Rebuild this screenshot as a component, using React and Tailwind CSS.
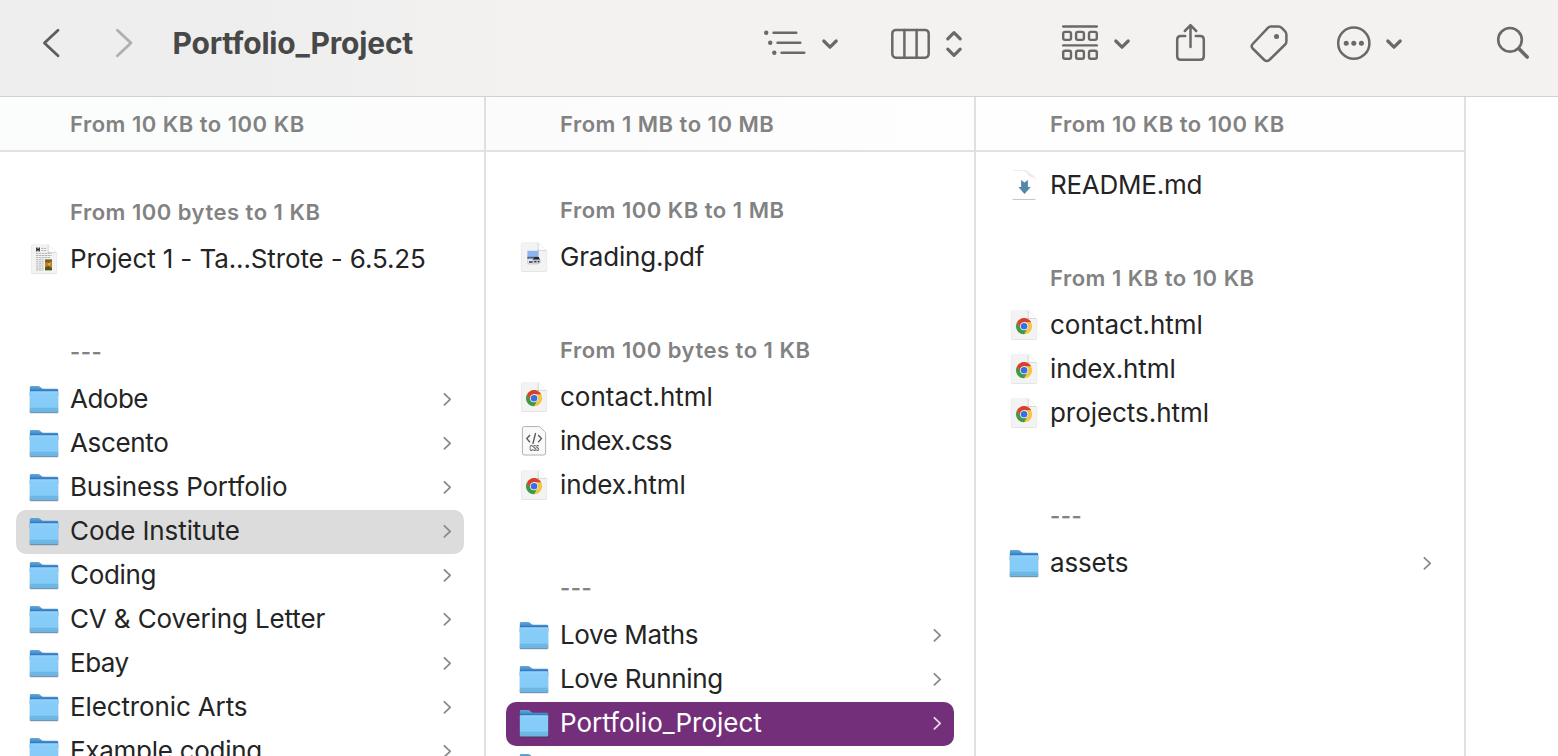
const INK = '#6a6967';

function Glyph({ x, width, className, color = INK, stroke = 2.6, children }) {
  return (
    <svg
      className={`h-12 shrink-0 ${className || ''}`}
      width={width}
      height="48"
      viewBox={`${x} 20 ${width} 48`}
      fill="none"
      stroke={color}
      strokeWidth={stroke}
      strokeLinecap="round"
      strokeLinejoin="round"
    >
      {children}
    </svg>
  );
}

function MenuChevron({ className }) {
  return (
    <Glyph x={0} width={18} stroke={3.2} className={className}>
      <path d="M2.8 41l6.2 6.2L15.2 41" />
    </Glyph>
  );
}

function Toolbar() {
  return (
    <header className="flex h-24 shrink-0 items-start bg-linear-to-r from-[#eeeeee] from-15% to-[#f4f2f1] to-35% pt-5 pl-[42px]">
      <Glyph x={42} width={18} stroke={2.8} color="#5e5e5e">
        <path d="M58 30.2L44.4 43L58 55.8" />
      </Glyph>
      <Glyph x={115} width={18} stroke={2.8} color="#b0b0b0" className="ml-[55px]">
        <path d="M117.4 30.2L131 43L117.4 55.8" />
      </Glyph>
      <h1 className="ml-[39.5px] h-12 w-[591.5px] text-[30px] leading-[47px] font-bold tracking-[-0.2px] whitespace-nowrap text-[#484848]">
        Portfolio_Project
      </h1>
      <Glyph x={764} width={42} stroke={2.6}>
        <path d="M773.6 32.8H796.2M777.6 42.8H800.2M781.6 52.8H804.2" />
        <g fill={INK} stroke="none">
          <circle cx="766.2" cy="32.8" r="2.2" />
          <circle cx="770.2" cy="42.8" r="2.2" />
          <circle cx="774.3" cy="52.8" r="2.2" />
        </g>
      </Glyph>
      <MenuChevron className="ml-[15px]" />
      <Glyph x={890} width={41} stroke={2.5} className="ml-[51px]">
        <rect x="892.3" y="29.9" width="36.4" height="27.8" rx="3.6" />
        <path d="M904.4 30V57.6M916.6 30V57.6" />
      </Glyph>
      <Glyph x={945} width={18} stroke={3.2} className="ml-[14px]">
        <path d="M947.8 38.8L954 32.6L960.2 38.8M947.8 49.2L954 55.4L960.2 49.2" />
      </Glyph>
      <Glyph x={1061} width={38} stroke={2.4} className="ml-[98px]">
        <path d="M1063.2 26.5H1096.8M1063.2 45.4H1096.8" />
        <rect x="1063.2" y="31.9" width="7.8" height="8" rx="1.8" />
        <rect x="1076.1" y="31.9" width="7.8" height="8" rx="1.8" />
        <rect x="1089" y="31.9" width="7.8" height="8" rx="1.8" />
        <rect x="1063.2" y="50.8" width="7.8" height="8" rx="1.8" />
        <rect x="1076.1" y="50.8" width="7.8" height="8" rx="1.8" />
        <rect x="1089" y="50.8" width="7.8" height="8" rx="1.8" />
      </Glyph>
      <MenuChevron className="ml-[14px]" />
      <Glyph x={1175} width={31} stroke={2.5} className="ml-[44px]">
        <path d="M1185.2 36H1180.8C1178.4 36 1177.2 37.2 1177.2 39.6V56.2C1177.2 58.6 1178.4 59.8 1180.8 59.8H1200.2C1202.6 59.8 1203.8 58.6 1203.8 56.2V39.6C1203.8 37.2 1202.6 36 1200.2 36H1195.8" />
        <path d="M1190.5 47V25.6M1184.8 31L1190.5 25.2L1196.2 31" />
      </Glyph>
      <Glyph x={1249} width={40} stroke={2.5} className="ml-[43px]">
        <path d="M1270.9 26.6H1278.6Q1280.4 26.6 1281.7 27.9L1284.9 31.1Q1286.4 32.6 1286.4 34.6V41.4Q1286.4 43.2 1285.1 44.5L1269.3 60Q1266.7 62 1264.3 60L1252.7 48.5Q1250.6 46.2 1252.7 44L1267.9 27.9Q1269.1 26.6 1270.9 26.6Z" />
        <circle cx="1276.5" cy="36.5" r="2.5" fill={INK} stroke="none" />
      </Glyph>
      <Glyph x={1336} width={36} stroke={2.5} className="ml-[47px]">
        <circle cx="1353.8" cy="43.2" r="15.6" />
        <g fill={INK} stroke="none">
          <circle cx="1346.2" cy="43.2" r="2.5" />
          <circle cx="1353.8" cy="43.2" r="2.5" />
          <circle cx="1361.4" cy="43.2" r="2.5" />
        </g>
      </Glyph>
      <MenuChevron className="ml-[13px]" />
      <Glyph x={1496} width={34} stroke={2.6} className="ml-[93px]">
        <circle cx="1510" cy="39.8" r="11.8" />
        <path d="M1519 48.8L1527.2 57" strokeWidth="3.6" />
      </Glyph>
    </header>
  );
}

function FolderIcon() {
  return (
    <svg width="32" height="32" viewBox="0 0 32 32">
      <defs>
        <linearGradient id="folderBack" x1="0" y1="2" x2="0" y2="12" gradientUnits="userSpaceOnUse">
          <stop offset="0" stopColor="#62a9d8" />
          <stop offset="0.3" stopColor="#4a92cf" />
          <stop offset="0.5" stopColor="#2f74bf" />
          <stop offset="1" stopColor="#2f74bf" />
        </linearGradient>
        <linearGradient id="folderFront" x1="0" y1="0" x2="0" y2="1">
          <stop offset="0" stopColor="#9ad6fb" />
          <stop offset="0.12" stopColor="#88cdf9" />
          <stop offset="0.74" stopColor="#85cbf8" />
          <stop offset="0.84" stopColor="#79c0ee" />
          <stop offset="1" stopColor="#6cb4e3" />
        </linearGradient>
      </defs>
      <path d="M1.4 8H30.6V28.4Q30.6 29.8 29.2 29.8H2.8Q1.4 29.8 1.4 28.4Z" fill="#000" opacity="0.12" />
      <path d="M1.8 26H30.2V27.8Q30.2 29 29 29H3Q1.8 29 1.8 27.8Z" fill="#4f7896" opacity="0.8" />
      <path d="M1.8 3.4Q1.8 2 3.2 2H10.2Q11.2 2 12 2.7L13.4 4Q14.2 4.7 15.2 4.7H28.8Q30.2 4.7 30.2 6V12H1.8Z" fill="url(#folderBack)" />
      <path d="M1.8 8.4Q1.8 7.2 3 7.2H29Q30.2 7.2 30.2 8.4V27Q30.2 28.2 29 28.2H3Q1.8 28.2 1.8 27Z" fill="url(#folderFront)" />
      <path d="M2 24.4H30M2 26.2H30" stroke="#5fa9d8" strokeWidth="0.6" />
    </svg>
  );
}

function Sheet({ children }) {
  return (
    <svg width="32" height="32" viewBox="0 1 32 32">
      <path d="M2.9 3.4Q2.9 1.4 4.9 1.4H20.4L29.1 10.2V29Q29.1 31 27.1 31H4.9Q2.9 31 2.9 29Z" fill="#000" opacity="0.12" />
      <path d="M3.4 3Q3.4 1.6 4.8 1.6H20.2L28.6 10V28.8Q28.6 30.2 27.2 30.2H4.8Q3.4 30.2 3.4 28.8Z" fill="#f3f3f3" />
      <path d="M19.8 1.6V10H28.6Z" fill="#b8b8b8" />
      <path d="M20.4 1.8L28.4 9.6H21.6Q20.4 9.6 20.4 8.4Z" fill="#fcfcfc" />
      {children}
    </svg>
  );
}

function ChromeIcon() {
  return (
    <Sheet>
      <g transform="translate(16.1 17.2)">
        <circle r="8.1" fill="#f6c445" />
        <path d="M-7.01 -4.05A8.1 8.1 0 0 0 0 8.1L3.4 2L-3.4 2Z" fill="#3c9a4d" />
        <path d="M-7.01 -4.05A8.1 8.1 0 0 1 7.01 -4.05H0L-3.6 2Z" fill="#d6412f" />
        <circle r="4" fill="#fff" />
        <circle r="3.3" fill="#3570e0" />
      </g>
    </Sheet>
  );
}

function PdfIcon() {
  return (
    <Sheet>
      <rect x="9.4" y="9.8" width="11.2" height="8" fill="#8db4ef" />
      <rect x="9.4" y="15.8" width="11.2" height="2" fill="#47618c" />
      <rect x="9.6" y="17.8" width="11.4" height="5.2" rx="1.6" fill="#e7ebf2" stroke="#a5abb8" strokeWidth="0.5" />
      <path d="M14.4 19.2L16.4 16H20.6L22.4 19.2Z" fill="#23262d" />
      <rect x="14.6" y="18.6" width="7.8" height="3.8" rx="1" fill="#c3c7ce" />
      <path d="M11 21H14.6M16.2 20.6H18.4M19.8 20.6H21.4" stroke="#2f333b" strokeWidth="1.3" />
    </Sheet>
  );
}

function DocumentIcon() {
  return (
    <Sheet>
      <path d="M8.8 4.6V8.4M11.2 4.6V8.4M8.8 6.5H11.2" stroke="#222" strokeWidth="1.3" />
      <path
        d="M13 5.4H18.6M13 7.6H18.6M8 10.4H23.6M8 12.5H23.6M8 14.6H22.6M8 16.7H15.6M8 18.8H15.6M8 20.9H15.6M8 23H15.6M8 25.1H15.6M8 27H15.6"
        stroke="#b4b4b4"
        strokeWidth="1"
        strokeDasharray="2.4 0.5"
      />
      <rect x="17" y="16.6" width="7" height="10.6" fill="#c77a26" />
      <path d="M17 16.6H24V18.2L21.4 20L17 19Z" fill="#6b6a28" />
      <path d="M17 24.4L20 23L24 25V27.2H17Z" fill="#44591f" />
      <path d="M19 21L22.6 19.2L22 22.8Z" fill="#f0ac35" />
    </Sheet>
  );
}

function CssIcon() {
  return (
    <svg width="32" height="32" viewBox="0 1 32 32">
      <path
        d="M4.4 3.6Q4.4 1.6 6.4 1.6H20.6Q21.8 1.6 22.7 2.5L26.7 6.5Q27.6 7.4 27.6 8.6V28Q27.6 30 25.6 30H6.4Q4.4 30 4.4 28Z"
        fill="#fafafa"
        stroke="#b0b0b0"
        strokeWidth="1"
      />
      <path d="M12 10L8.8 13.6L12 17.2M20.2 10L23.4 13.6L20.2 17.2M17.6 8L14.8 19" fill="none" stroke="#5a5a5a" strokeWidth="1.4" />
      <text x="16.3" y="26.4" textAnchor="middle" fontFamily="Inter, sans-serif" fontSize="7" fontWeight="600" textLength="9.6" lengthAdjust="spacingAndGlyphs" fill="#3f3f3f">
        CSS
      </text>
    </svg>
  );
}

function MarkdownIcon() {
  return (
    <svg width="32" height="32" viewBox="0 1.6 32 32">
      <path d="M5 2H17Q19 2.6 20 5.4Q21.2 8 24.6 8.4Q26.6 9 27.2 11" fill="none" stroke="#eeeeee" strokeWidth="1" />
      <path d="M14 2H18.6L26.8 8.2Q27 9.4 26 8.9Q23 8.4 21 7.8Q20.2 3.6 14 2Z" fill="#ececec" />
      <path d="M4.6 31.1H27.4" stroke="#c8c8c8" strokeWidth="1.1" />
      <path d="M13.1 11.6L16.5 14.2L19.9 11.6V18.6H22.8L16.5 25.6L10.4 18.6H13.1Z" fill="#5488a8" />
    </svg>
  );
}

const ICONS = {
  folder: FolderIcon,
  chrome: ChromeIcon,
  pdf: PdfIcon,
  doc: DocumentIcon,
  css: CssIcon,
  md: MarkdownIcon,
};

function GroupLabel({ text, gap = 'pt-11', tracking = 'tracking-[0.5px]' }) {
  return (
    <div className={gap}>
      <div className={`h-[52px] pl-[54px] text-[22px] leading-[53px] font-semibold whitespace-nowrap text-[#828282] ${tracking}`}>
        {text}
      </div>
    </div>
  );
}

const ROW_STATE = {
  none: 'text-[#242424]',
  path: 'bg-[#dcdcdc] text-[#242424]',
  active: 'bg-[#732f7a] text-white',
};

function Row({ name, icon = 'folder', state = 'none', tracking = 'tracking-[0px]' }) {
  const Icon = ICONS[icon];
  return (
    <div className={`flex h-11 w-[448px] shrink-0 items-center rounded-[10px] pl-3 ${ROW_STATE[state]}`}>
      <Icon />
      <span className={`ml-[10px] flex-1 pb-[2px] text-[26px] leading-[42px] whitespace-nowrap ${tracking}`}>{name}</span>
      {icon === 'folder' && (
        <svg className="mr-3" width="10" height="16" viewBox="0 0 10 16" fill="none" stroke={state === 'active' ? '#e6d8e8' : '#8a8a8a'} strokeWidth="1.8" strokeLinecap="round" strokeLinejoin="round">
          <path d="M2.4 1.8L8.2 7.3L2.4 12.8" />
        </svg>
      )}
    </div>
  );
}

function Column({ title, width, inset, header, children }) {
  return (
    <section className={`flex h-full shrink-0 flex-col overflow-hidden border-r-2 border-[#e0e0e0] ${width}`}>
      <div className={`h-[55px] shrink-0 border-b-2 border-[#e2e2e2] text-[22px] leading-[54px] font-semibold tracking-[0.5px] whitespace-nowrap text-[#828282] ${header}`}>
        {title}
      </div>
      <div className={`flex min-h-0 flex-1 flex-col ${inset}`}>{children}</div>
    </section>
  );
}

export default function App() {
  return (
    <div className="flex h-[756px] w-[1558px] flex-col overflow-hidden bg-white font-['Inter',sans-serif]">
      <Toolbar />
      <main className="flex min-h-0 flex-1 border-t border-[#d2d2d2]">
        <Column title="From 10 KB to 100 KB" width="w-[486px]" header="pl-[70px] bg-linear-to-r from-[#fafdfc] to-[#fcfcfc]" inset="pl-4 pt-[34px]">
          <GroupLabel text="From 100 bytes to 1 KB" gap="pt-0" />
          <Row name="Project 1 - Ta...Strote - 6.5.25" icon="doc" tracking="tracking-[-0.12px]" />
          <GroupLabel text="---" />
          <Row name="Adobe" tracking="tracking-[-0.5px]" />
          <Row name="Ascento" tracking="tracking-[-0.35px]" />
          <Row name="Business Portfolio" tracking="tracking-[-0.17px]" />
          <Row name="Code Institute" state="path" tracking="tracking-[-0.1px]" />
          <Row name="Coding" tracking="tracking-[-0.35px]" />
          <Row name="CV & Covering Letter" tracking="tracking-[-0.13px]" />
          <Row name="Ebay" tracking="tracking-[-0.5px]" />
          <Row name="Electronic Arts" tracking="tracking-[-0.13px]" />
          <Row name="Example coding" tracking="tracking-[-0.28px]" />
        </Column>
        <Column title="From 1 MB to 10 MB" width="w-[490px]" header="pl-[74px] bg-linear-to-r from-[#fbfbfb] to-[#fefefe]" inset="pl-5 pt-8">
          <GroupLabel text="From 100 KB to 1 MB" gap="pt-0" />
          <Row name="Grading.pdf" icon="pdf" tracking="tracking-[-0.2px]" />
          <GroupLabel text="From 100 bytes to 1 KB" />
          <Row name="contact.html" icon="chrome" />
          <Row name="index.css" icon="css" tracking="tracking-[-0.45px]" />
          <Row name="index.html" icon="chrome" tracking="tracking-[-0.12px]" />
          <GroupLabel text="---" gap="pt-[54px]" />
          <Row name="Love Maths" tracking="tracking-[-0.4px]" />
          <Row name="Love Running" tracking="tracking-[-0.33px]" />
          <Row name="Portfolio_Project" state="active" />
          <Row name="" />
        </Column>
        <Column title="From 10 KB to 100 KB" width="w-[490px]" header="pl-[74px] bg-[#fefefe]" inset="pl-5 pt-3">
          <Row name="README.md" icon="md" tracking="tracking-[-0.25px]" />
          <GroupLabel text="From 1 KB to 10 KB" />
          <Row name="contact.html" icon="chrome" />
          <Row name="index.html" icon="chrome" tracking="tracking-[-0.12px]" />
          <Row name="projects.html" icon="chrome" tracking="tracking-[-0.05px]" />
          <GroupLabel text="---" gap="pt-[54px]" />
          <Row name="assets" tracking="tracking-[-0.15px]" />
        </Column>
      </main>
    </div>
  );
}
